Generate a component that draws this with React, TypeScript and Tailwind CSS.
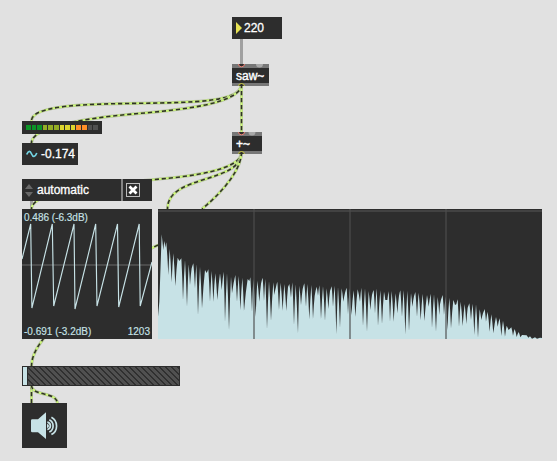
import React from "react";

type Point = [number, number];

// Partial peaks and the notches between them, in thirds of a pixel.
const bands: { x: number; peaks: Point[]; notches: Point[] }[] = [
  {
    x: -9,
    peaks: [[20,88],[28,108],[34,112],[44,132],[55,145],[68,158],[79,160],[90,165],[101,178],[115,175],[124,178],[135,185],[150,195],[160,193],[170,198],[181,205],[195,205],[206,200],[216,205],[228,215],[241,210],[251,213],[262,218],[278,222]],
    notches: [[9,335],[13,290],[25,135],[31,128],[40,210],[50,232],[61,243],[73,168],[84,285],[96,305],[105,240],[110,190],[120,250],[129,330],[141,310],[155,204],[165,290],[175,290],[187,285],[200,255],[210,350],[222,375],[231,265],[246,290],[256,315],[267,318],[283,228]],
  },
  {
    x: 276,
    peaks: [[1,217],[10,222],[22,227],[38,218],[46,222],[57,228],[70,232],[82,230],[92,233],[103,237],[118,237],[127,232],[137,238],[148,242],[163,235],[172,237],[184,240],[200,245],[208,241],[219,243],[230,250],[245,244],[254,242],[264,246],[275,250]],
    notches: [[6,320],[17,335],[28,290],[33,236],[42,288],[51,372],[63,348],[73,270],[78,246],[87,315],[98,317],[109,318],[114,246],[123,278],[132,360],[144,385],[153,300],[158,252],[168,305],[178,343],[189,342],[194,272],[204,272],[213,342],[225,348],[235,312],[240,258],[249,305],[259,388],[270,368],[280,290],[285,264]],
  },
  {
    x: 561,
    peaks: [[5,248],[14,250],[26,256],[38,253],[49,248],[60,250],[71,258],[86,255],[95,250],[106,256],[117,260],[131,259],[140,258],[152,265],[166,256],[176,255],[187,257],[198,264],[211,261],[221,263],[233,266],[246,270],[257,266],[267,268],[278,276]],
    notches: [[9,328],[19,330],[31,335],[45,290],[54,362],[66,380],[76,315],[81,270],[90,325],[99,362],[111,357],[121,285],[127,285],[135,350],[146,350],[157,325],[162,272],[171,335],[181,388],[192,378],[202,305],[207,274],[216,335],[227,345],[238,348],[251,305],[261,368],[273,380],[283,330],[288,284]],
  },
  {
    x: 846,
    peaks: [[8,270],[17,275],[28,278],[40,285],[53,283],[62,290],[74,297],[88,295],[98,296],[108,298],[119,313],[134,312],[143,320],[154,328],[168,336],[179,340],[189,347],[200,362],[214,367],[224,372],[236,381],[246,390],[260,391],[270,394],[285,397],[300,398],[306,399]],
    notches: [[0,298],[12,330],[22,375],[33,370],[45,300],[49,298],[57,365],[68,363],[79,357],[83,308],[93,345],[103,390],[114,398],[124,345],[129,325],[138,350],[149,380],[160,385],[173,365],[184,393],[195,395],[206,375],[219,392],[230,396],[241,397],[265,398],[276,401],[291,401]],
  },
];

const extrema = bands
  .flatMap((b) => [...b.peaks, ...b.notches].map(([x, y]): Point => [x + b.x, y - 12]))
  .sort((a, b) => a[0] - b[0]);

// Notches are cusps: the level falls slowly from a peak, then drops sharply.
const spectrum = extrema
  .flatMap((p, i): Point[] => {
    const q = extrema[i + 1];
    if (!q || i < 3 || Math.abs(q[1] - p[1]) < 15) return [p];
    const [peak, notch] = p[1] < q[1] ? [p, q] : [q, p];
    return [p, [peak[0] + (notch[0] - peak[0]) * 0.5, peak[1] + (notch[1] - peak[1]) * 0.42]];
  })
  .map((p) => p.join(","))
  .join(" ");

const signalCords = [
  "M241.5 84 C241.5 102 195 102.5 140 103.3 S31.5 105 31.5 121",
  "M241.5 84 C241.5 104 180 110 136 113.7 S31.5 126 31.5 143",
  "M241.5 84 V133",
  "M241.5 152 C241.5 170 192 176.5 152 179.7 S31.5 190 31.5 209",
  "M241.5 152 C241.5 184 167.5 174 167.5 209",
  "M241.5 152 C241.5 168 226 189 202 209",
  "M158 245 L151 248.5",
  "M44 338 C38 346 31.5 355 31.5 367",
  "M31.5 385 V404",
  "M31.5 385 C31.5 397 57.5 391 57.5 404",
];

function Cords() {
  return (
    <svg className="absolute inset-0" width="557" height="461" fill="none">
      <path d="M241.5 38 V66 M31.5 200 V210" stroke="#a0a0a0" strokeWidth="3" />
      {signalCords.map((d) => (
        <g key={d}>
          <path d={d} stroke="#b3bba4" strokeWidth="3" />
          <path d={d} stroke="#cdf87a" strokeWidth="2" />
          <path d={d} stroke="#30312a" strokeWidth="1.6" strokeDasharray="4.2 2.8" />
        </g>
      ))}
    </svg>
  );
}

function SignalObject({ label, className, inlet }: { label: string; className: string; inlet: number }) {
  return (
    <div className={`absolute flex flex-col justify-between bg-[#2d2d2d] text-xs leading-none ${className}`}>
      <svg className="h-1 w-full" fill="none">
        <rect width="100%" height="4" fill="#777777" />
        <path d="M6.5 0a3 2.8 0 0 0 6 0" fill="#332d2d" stroke="#ed8378" strokeWidth="1" />
        <circle cx={inlet} cy="0" r="3.5" fill="#a8a8a8" />
      </svg>
      <span className="pl-1 [-webkit-text-stroke:0.4px_white]">{label}</span>
      <svg className="h-[3px] w-full" fill="none">
        <rect width="100%" height="4" fill="#777777" />
        <path d="M6.5 3.5a3 3 0 0 1 6 0" fill="#2d2d2d" stroke="#d0cf45" strokeWidth="1" />
      </svg>
    </div>
  );
}

const leds = [
  "bg-[#0b9427]", "bg-[#0b9427]", "bg-[#0b9427]",
  "bg-[#94ad25]", "bg-[#94ad25]", "bg-[#94ad25]",
  "bg-[#ddd52e]", "bg-[#ddd52e]", "bg-[#ddd52e]",
  "bg-[#ff9028]", "bg-[#ff9028]", "bg-[#505050]", "bg-[#505050]",
];

export default function App() {
  return (
    <main className="relative h-[461px] w-[557px] overflow-hidden bg-[#e1e1e1] font-['Liberation_Sans',Arial,sans-serif] text-white">
      <Cords />

      <div className="absolute left-[232px] top-[17px] flex h-[22px] w-[50px] items-center bg-[#2d2d2d] pl-1 text-xs">
        <svg width="6" height="12"><path d="M0 0L6 6L0 12Z" fill="#e7e253" /></svg>
        <span className="ml-[2px] [-webkit-text-stroke:0.3px_white]">220</span>
      </div>

      <SignalObject label="saw~" className="left-[232px] top-[64px] h-[22px] w-[37px]" inlet={27.5} />
      <SignalObject label="+~" className="left-[232px] top-[132px] h-[22px] w-[30px]" inlet={20} />

      <div className="absolute left-[22px] top-[121px] flex h-[13px] w-[80px] items-center gap-px bg-[#2d2d2d] px-1">
        {leds.map((color, i) => <span key={i} className={`h-[5px] flex-1 ${color}`} />)}
      </div>

      <div className="absolute left-[22px] top-[143px] flex h-[22px] w-[56px] items-center bg-[#2d2d2d] pl-1 text-xs">
        <svg width="12" height="10" fill="none" stroke="#73d5e4" strokeWidth="1.7">
          <path d="M.7 5.5C2.5 1 4.2 1.6 5.6 5S9 8.5 10.8 4" />
        </svg>
        <span className="ml-[3px] [-webkit-text-stroke:0.3px_white]">-0.174</span>
      </div>

      <div className="absolute left-[22px] top-[179px] flex h-[22px] w-[130px] bg-[#2d2d2d] text-xs">
        <div className="flex w-[99px] items-center pl-[3px]">
          <svg width="8" height="13" fill="#686868"><path d="M0 5L4 0L8 5ZM0 8H8L4 13Z" /></svg>
          <span className="ml-1 [-webkit-text-stroke:0.3px_white]">automatic</span>
        </div>
        <div className="w-[2px] bg-[#858585]" />
        <svg className="ml-[3px] mt-1" width="14" height="14" fill="none">
          <rect x=".5" y=".5" width="13" height="13" stroke="#bcbcbc" />
          <path d="M3.5 3.5L10.5 10.5M10.5 3.5L3.5 10.5" stroke="white" strokeWidth="2.8" />
        </svg>
      </div>

      <div className="absolute left-[22px] top-[209px] flex h-[130px] w-[130px] flex-col justify-between bg-[#2d2d2d] px-[2px] pb-[2px] pt-[3px] text-[10px] leading-[11px] text-[#c7e2e6]">
        <svg className="absolute inset-0" width="130" height="130" fill="none">
          <path d="M0 56H130" stroke="#4b4b4b" strokeWidth="2" />
          <path d="M0 50L8.7 15L9.9 99L30.3 15L31.7 97L52 15L53 100L73.7 15L75 97L95.5 15L96.7 98L117.2 15L118.2 97L130 53" stroke="#c7e2e6" strokeWidth="1.15" />
        </svg>
        <span className="relative [-webkit-text-stroke:0.15px_#c7e2e6]">0.486 (-6.3dB)</span>
        <div className="relative flex justify-between [-webkit-text-stroke:0.15px_#c7e2e6]"><span>-0.691 (-3.2dB)</span><span>1203</span></div>
      </div>

      <div className="absolute left-[158px] top-[209px] h-[130px] w-[384px] bg-[#2d2d2d]">
        <svg width="384" height="130" viewBox="0 0 1152 390">
          <rect y="3" width="1152" height="6" fill="#424242" />
          <polygon points={`0,390 ${spectrum} 1152,390`} fill="#c7e2e6" />
          <path d="M288 0V390M576 0V390M864 0V390" stroke="#4e4e4e" strokeOpacity=".58" strokeWidth="6" />
        </svg>
      </div>

      <div className="absolute left-[22px] top-[366px] flex h-[20px] w-[158px] border border-[#2d2d2d] bg-[repeating-linear-gradient(45deg,#505050_0px,#505050_2.4px,#303030_2.4px,#303030_4.24px)]">
        <div className="w-[5px] border-r border-[#2d2d2d] bg-[#c7e2e6]" />
      </div>

      <div className="absolute left-[22px] top-[403px] size-[45px] bg-[#2d2d2d]">
        <svg width="45" height="45" fill="none">
          <path d="M9 17.5Q9 16.3 10.2 16.3H16L24 9.3V36L16 29.3H10.2Q9 29.3 9 28Z" fill="#c7e2e6" />
          <path d="M25 21A2 2 0 0 1 25 25Z" fill="#c7e2e6" />
          <path d="M25.3 19.2A3.7 3.7 0 0 1 25.3 26.5M27.3 16.8A6.8 6.8 0 0 1 27.3 29M29.4 14.2A9.9 9.9 0 0 1 29.4 31.6" stroke="#c7e2e6" strokeWidth="1.7" />
        </svg>
      </div>
    </main>
  );
}
